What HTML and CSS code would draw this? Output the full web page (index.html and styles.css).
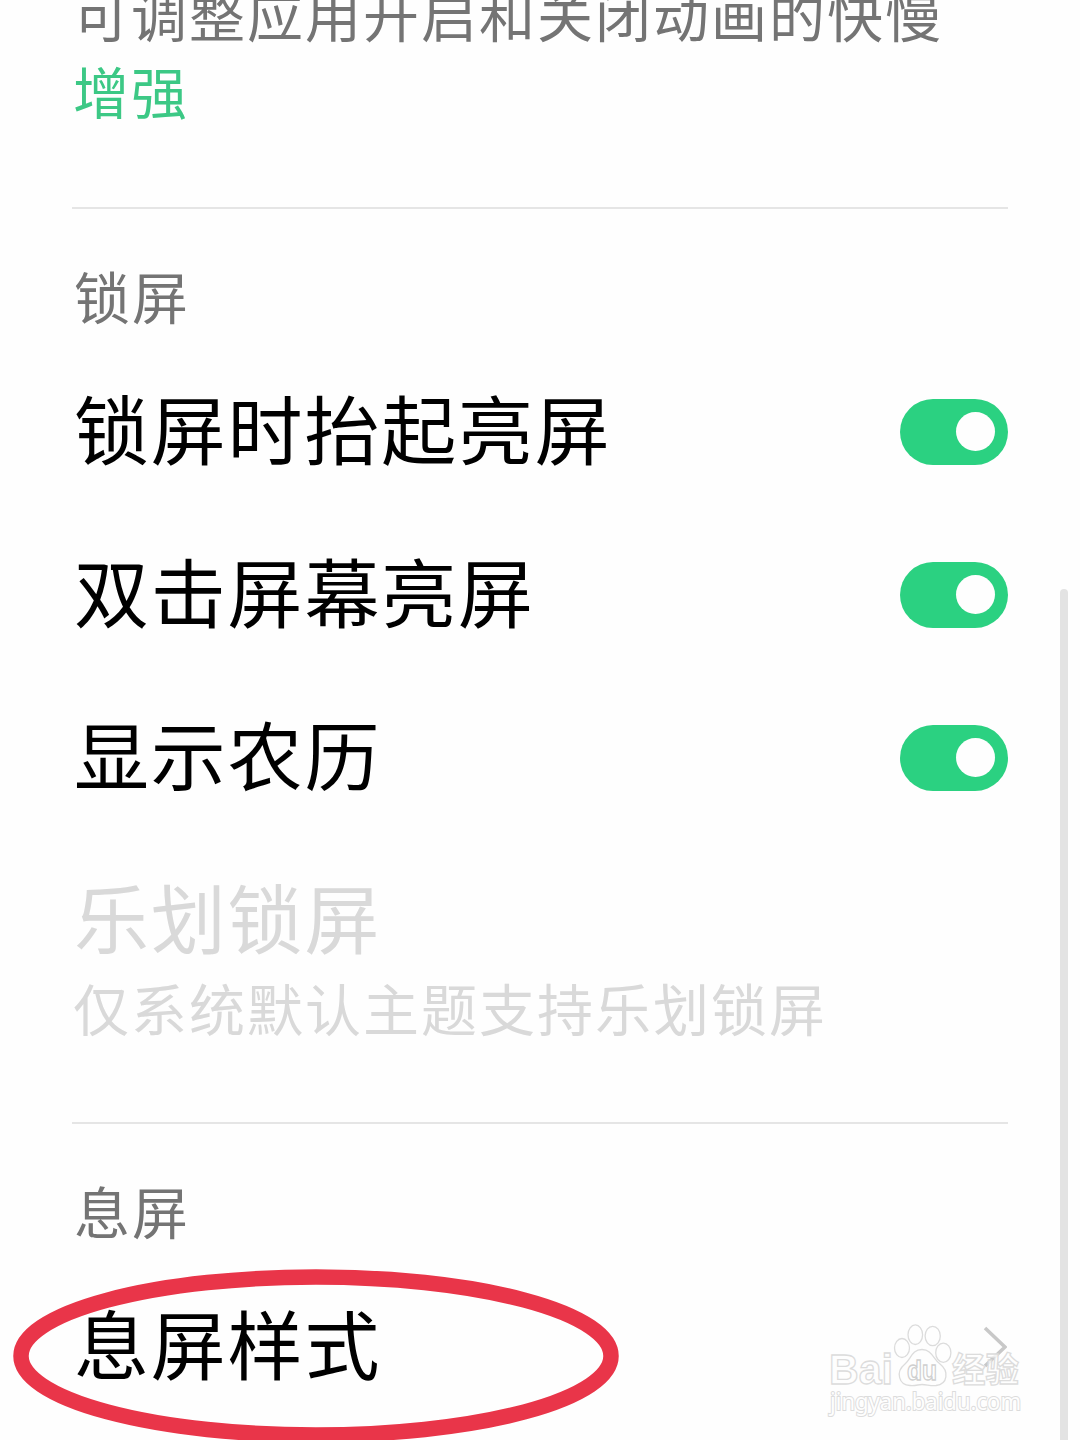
FILE: index.html
```html
<!DOCTYPE html>
<html lang="zh-CN">
<head>
<meta charset="utf-8">
<title>设置</title>
<link rel="stylesheet" href="styles.css">
</head>
<body>
<main class="screen">
  <div class="intro">
    <p class="summary">可调整应用开启和关闭动画的快慢</p>
    <p class="summary value">增强</p>
  </div>
  <section class="group">
    <h2 class="label">锁屏</h2>
    <div class="row"><span class="title">锁屏时抬起亮屏</span><span class="switch"></span></div>
    <div class="row"><span class="title">双击屏幕亮屏</span><span class="switch"></span></div>
    <div class="row"><span class="title">显示农历</span><span class="switch"></span></div>
    <div class="row disabled">
      <span class="title">乐划锁屏</span>
      <span class="summary">仅系统默认主题支持乐划锁屏</span>
    </div>
  </section>
  <section class="group">
    <h2 class="label">息屏</h2>
    <div class="row">
      <span class="title">息屏样式</span>
      <svg class="chevron" width="26" height="44" viewBox="0 0 26 44"><path d="M4 3 24 22 4 41"/></svg>
    </div>
  </section>
  <div class="scrollbar"></div>
  <svg class="marker" width="610" height="176" viewBox="0 0 610 176"><ellipse cx="305" cy="88" rx="295" ry="79"/></svg>
  <svg class="watermark" width="210" height="100" viewBox="820 1320 210 100">
    <g class="mark">
      <text class="brand" x="829" y="1384" font-size="43" textLength="64" lengthAdjust="spacingAndGlyphs">Bai</text>
      <ellipse cx="902" cy="1348" rx="7.5" ry="9.5"/>
      <ellipse cx="915.3" cy="1334.7" rx="7.3" ry="9.8"/>
      <ellipse cx="932.7" cy="1336" rx="7.6" ry="9.6"/>
      <ellipse cx="943.3" cy="1352.7" rx="7.6" ry="9.6"/>
      <path d="M922 1349.5C912 1349.5 911 1359 905 1364C895 1372 899 1385 910 1385.500C916 1386 918 1384.500 922 1384.500C927 1384.500 930 1386 936 1385.500C948 1384 949 1371 940 1364C933 1359 932 1349.500 922 1349.500Z"/>
      <text class="du" x="907" y="1380" font-size="28" textLength="30" lengthAdjust="spacingAndGlyphs">du</text>
      <text class="brand" x="952" y="1382" font-size="34" textLength="67" lengthAdjust="spacingAndGlyphs">经验</text>
      <text class="site" x="830" y="1410" font-size="23" textLength="191" lengthAdjust="spacingAndGlyphs">jingyan.baidu.com</text>
    </g>
  </svg>
</main>
</body>
</html>
```
FILE: styles.css
```css
* { box-sizing: border-box; }
body {
  margin: 0;
  overflow: hidden;
  background: #fefefe;
  color: #000;
  font-family: KaiTi, "Noto Sans CJK SC", sans-serif;
}
.screen {
  position: relative;
  height: 1440px;
  padding: 0 72px;
  overflow: hidden;
}
.intro {
  display: flow-root;
  height: 207px;
}
.summary {
  margin: 0;
  padding-left: 1px;
  font-size: 56px;
  line-height: 56px;
  letter-spacing: 2px;
  color: #747474;
  white-space: nowrap;
}
.intro .summary {
  height: 76px;
  line-height: 76px;
  margin-top: -25px;
}
.intro .value {
  margin-top: 1px;
  color: #3cc885;
}
.group {
  height: 915px;
  border-top: 2px solid #e5e5e5;
  padding-top: 58px;
}
.label {
  margin: 0 0 27px;
  padding-left: 2px;
  font-size: 56px;
  line-height: 56px;
  font-weight: 400;
  letter-spacing: 2px;
  color: #747474;
}
.row {
  display: flex;
  align-items: center;
  justify-content: space-between;
  height: 163px;
}
.title {
  padding: 0 0 9px 2px;
  font-size: 75px;
  line-height: 76px;
  letter-spacing: 1.8px;
  white-space: nowrap;
}
.switch {
  display: flex;
  align-items: center;
  justify-content: flex-end;
  width: 108px;
  height: 66px;
  padding-right: 13px;
  border-radius: 33px;
  background: #2bd181;
}
.switch::before {
  content: "";
  width: 39px;
  height: 39px;
  border-radius: 50%;
  background: #fefefe;
}
.disabled {
  flex-direction: column;
  align-items: flex-start;
  justify-content: flex-start;
  gap: 16px;
  height: 282px;
  padding-top: 39px;
}
.disabled .title,
.disabled .summary { color: #d9d9d9; }
.chevron {
  fill: none;
  stroke: #c8c8c8;
  stroke-width: 3.6;
  margin-right: 1px;
}
.scrollbar {
  position: absolute;
  left: 1060px;
  top: 589px;
  width: 8px;
  height: 860px;
  border-radius: 4px;
  background: #e3e3e3;
}
.marker {
  position: absolute;
  left: 11px;
  top: 1268px;
  fill: none;
  stroke: #e93549;
  stroke-width: 15.5;
}
.watermark {
  position: absolute;
  left: 820px;
  top: 1320px;
}
.mark {
  fill: #fefefe;
  fill-opacity: .8;
  stroke: #dcdcdc;
  stroke-width: 1.3;
}
.brand {
  font-family: "Liberation Sans", "Noto Sans CJK SC", sans-serif;
  font-weight: 700;
}
.du {
  font-family: "Liberation Sans", sans-serif;
  font-weight: 700;
  stroke: #cfcfcf;
}
.site {
  font-family: "Noto Sans", sans-serif;
  paint-order: stroke;
  stroke-width: 2;
  fill-opacity: 1;
}
```
